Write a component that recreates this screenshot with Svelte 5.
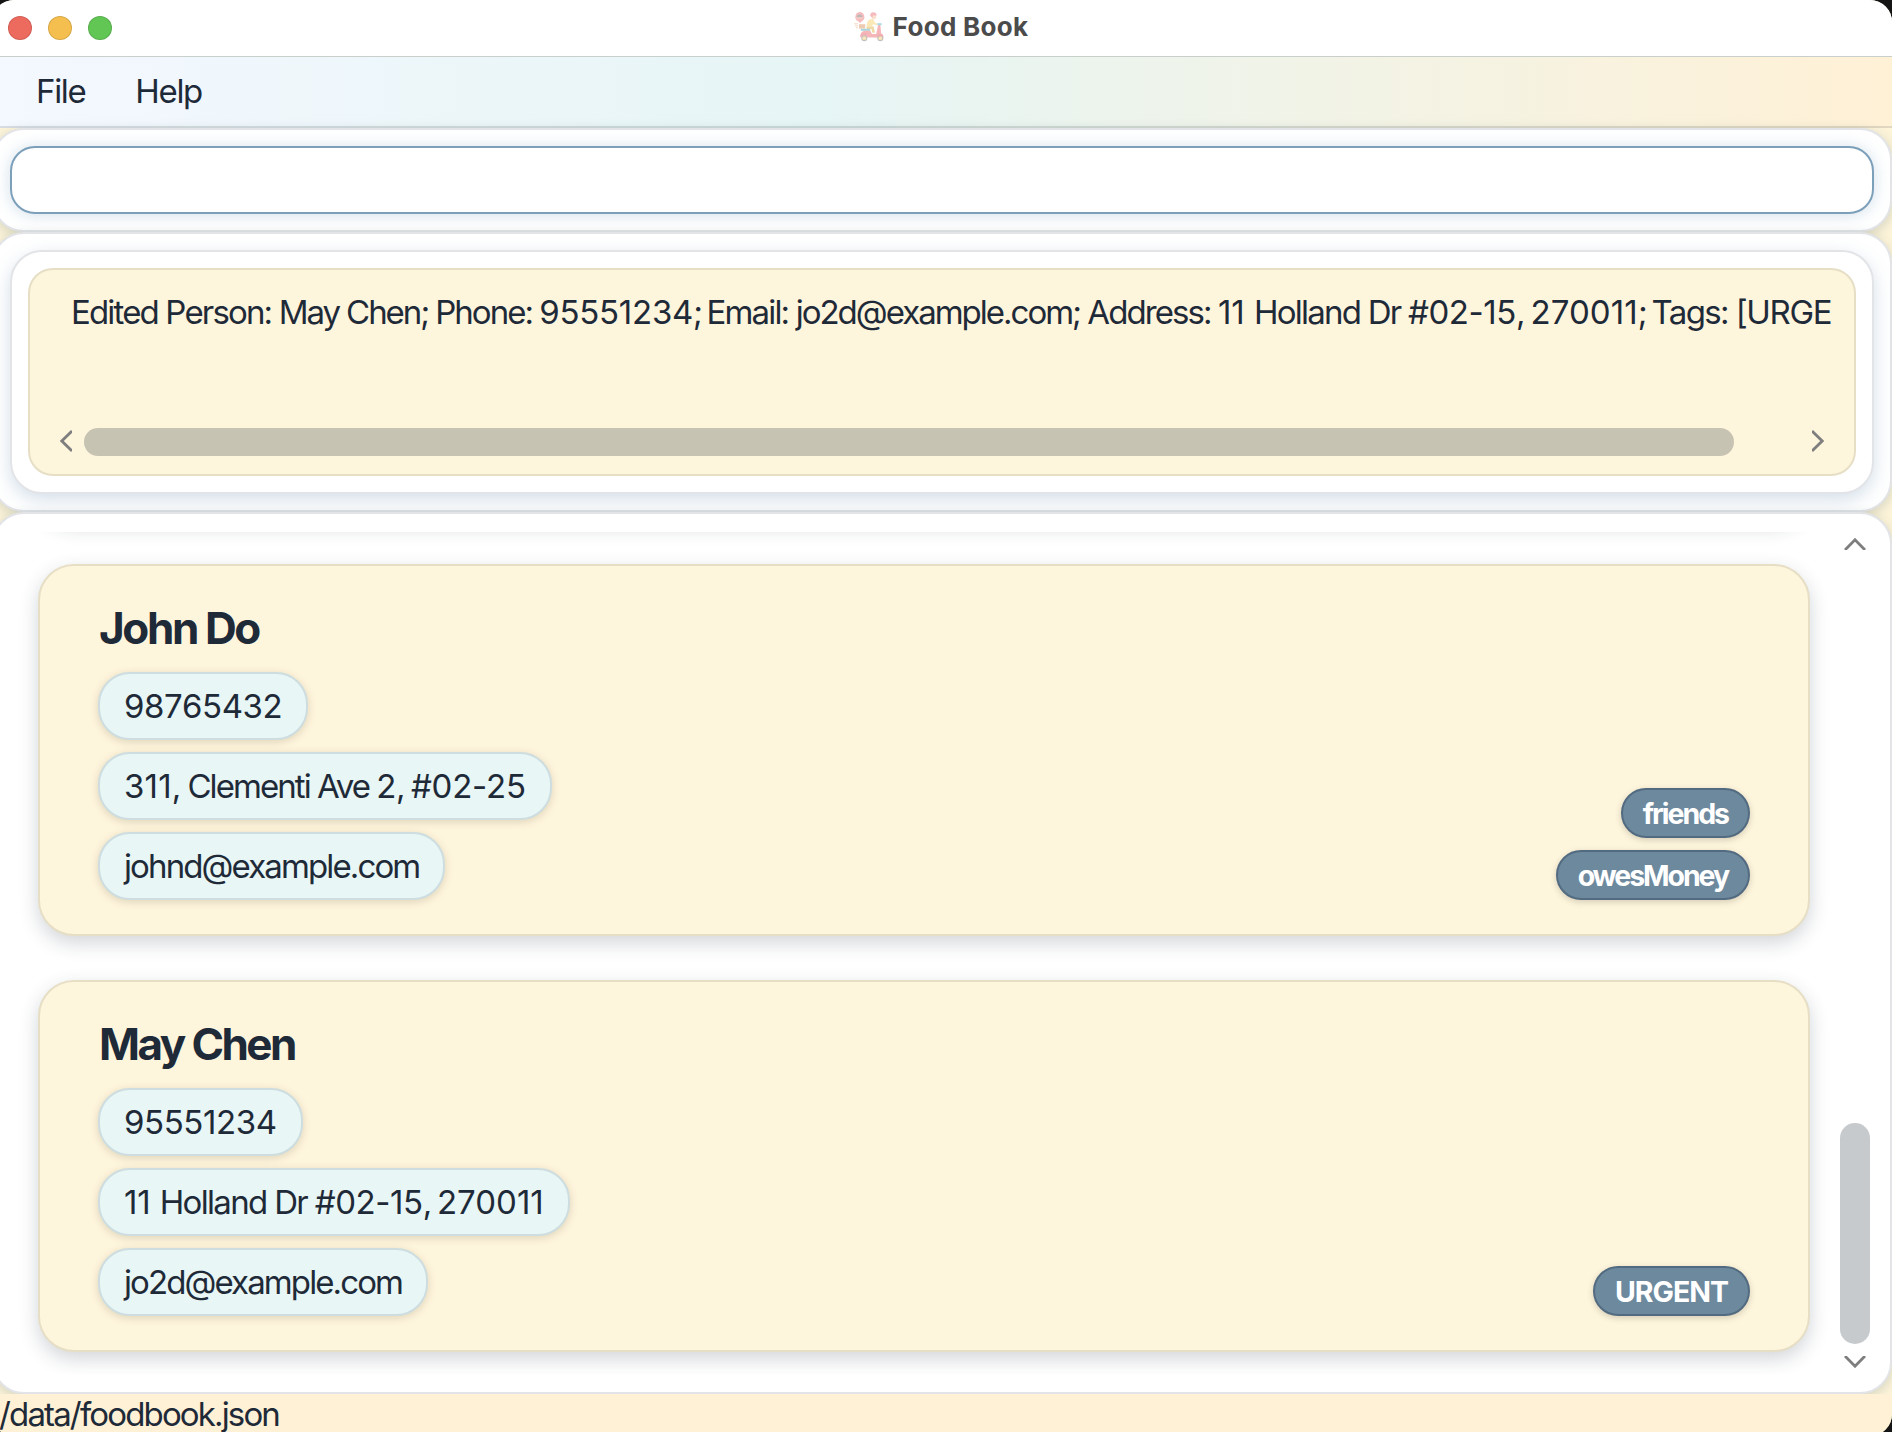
<script>
  // Each text is a list of [content, letter-spacing in px] runs.
  const message = [
    ['Edited Person: ', -1.84], ['May Chen; ', -2.07], ['Phone: ', -2.0], ['95551234', -0.25], ['; ', -2.9],
    ['Email: ', -1.85], ['jo2d@example.com; ', -2.0], ['Address: ', -1.93], ['11 ', 0], ['Holland Dr ', -1.77],
    ['#02-15', -0.4], [', ', -2.2], ['270011', 0.1], ['; ', -2.8], ['Tags: ', -1.6], ['[URGE', -1.35]
  ];

  const people = [
    {
      name: 'John Do',
      spacing: -2.4,
      fields: [
        [['98765432', -0.38]],
        [['311', 0.2], [', ', -1.6], ['Clementi Ave ', -1.93], ['2', -0.6], [', ', -1.9], ['#02-25', -0.2]],
        [['johnd@example.com', -1.88]]
      ],
      tags: [['friends', -2.05], ['owesMoney', -2.1]]
    },
    {
      name: 'May Chen',
      spacing: -2.55,
      fields: [
        [['95551234', -0.42]],
        [['11 ', -0.15], ['Holland Dr ', -1.67], ['#02-15', -0.4], [', ', -2.3], ['270011', 0]],
        [['jo2d@example.com', -1.9]]
      ],
      tags: [['URGENT', -1]]
    }
  ];
</script>

{#snippet runs(list)}{#each list as [text, spacing]}<span style:letter-spacing="{spacing}px">{text}</span>{/each}{/snippet}

<div class="screen">
  <div class="window">
    <header class="titlebar">
      <div class="lights">
        <span class="light red"></span>
        <span class="light yellow"></span>
        <span class="light green"></span>
      </div>
      <div class="title">
        <svg class="logo" viewBox="0 0 30 30" width="30" height="30">
          <path d="M5.6 0a4.9 4.9 0 0 1 2.2 9.2L6 11 4.2 9.3A4.9 4.9 0 0 1 5.6 0z" fill="#f3acae" />
          <path d="M2.8 5.2a2.8 2.6 0 0 1 5.6 0z" fill="#a9a7a5" />
          <path d="M2.5 6h6.2" stroke="#f9d7c5" stroke-width=".9" />
          <path d="M0 11.8h4M1 13.8h3M2 15.8h2" stroke="#f6cfb2" stroke-width="1" />
          <rect x="5" y="12.2" width="6.2" height="4.4" fill="#e9bfa0" />
          <path d="M16.2 3.6a3.3 3.3 0 0 1 6.5-.8l-1 1.8-3.2 1.8z" fill="#f3a9ad" />
          <path d="M18.6 3.6h3.6v2.2l-1.5 1.4h-2z" fill="#fbdcc4" />
          <path d="M15.3 7.4l3.9-.4 1.5 3.5 3 1.2-.4 1.5-4.5-1-.6 2.4h-5.6c0-3 .8-5.8 2.7-7.2z" fill="#fae3a5" />
          <path d="M12.6 14.6h7.1l1.2 6.2h-2.5l-1-3.8h-4.8z" fill="#ecd08f" />
          <path d="M6.8 16.8h9.3v2H6.8z" fill="#8fcdd5" />
          <path d="M6.2 25.2c0-4.3 1.8-6.5 5.3-6.5h4.8l1.6 3.4h4.3l1.9-9h2.3l.7 8.4c1.6.5 2.4 2 2.4 4.3z" fill="#f3a4a8" />
          <path d="M23.3 11.2h4.3v1.9h-4.3z" fill="#93d4dd" />
          <circle cx="10.3" cy="26.2" r="3" fill="#b4b0ac" />
          <circle cx="10.3" cy="26.2" r="1.9" fill="#f8dfa8" />
          <circle cx="26.3" cy="26.2" r="3" fill="#b4b0ac" />
          <circle cx="26.3" cy="26.2" r="1.9" fill="#f8dfa8" />
          <path d="M6.8 22.4h6.8a3.9 3.9 0 0 0-6.8 1.9zM22.8 24.3a3.6 3.6 0 0 1 6.8 0z" fill="#f0979d" />
        </svg>
        <span>Food Book</span>
      </div>
    </header>

    <nav class="menubar">
      <span>File</span>
      <span>Help</span>
    </nav>

    <main>
      <section class="panel command">
        <input type="text" aria-label="Command" />
      </section>

      <section class="panel result">
        <div class="frame">
          <div class="message">
            <p>{@render runs(message)}</p>
            <div class="hscroll">
              <svg viewBox="0 0 12 22" width="12" height="22"><path d="M12 1L1.8 11 12 21" /></svg>
              <div class="hthumb"></div>
              <svg class="end" viewBox="0 0 12 22" width="12" height="22"><path d="M0 1l10.2 10L0 21" /></svg>
            </div>
          </div>
        </div>
      </section>

      <section class="panel list">
        <div class="viewport">
          <article class="card scrolled"></article>
          {#each people as person}
            <article class="card">
              <div class="details">
                <h2>{@render runs([[person.name, person.spacing]])}</h2>
                {#each person.fields as field}
                  <div class="pill">{@render runs(field)}</div>
                {/each}
              </div>
              <div class="tags">
                {#each person.tags as tag}
                  <div class="tag">{@render runs([tag])}</div>
                {/each}
              </div>
            </article>
          {/each}
        </div>
        <div class="vscroll">
          <svg viewBox="0 0 22 12" width="22" height="12"><path d="M1 12L11 1.8 21 12" /></svg>
          <div class="vthumb"></div>
          <svg viewBox="0 0 22 12" width="22" height="12"><path d="M1 0l10 10.2L21 0" /></svg>
        </div>
      </section>
    </main>

    <footer>/data/foodbook.json</footer>
  </div>
</div>

<style>
  :global(body) {
    background: #111;
  }
  * {
    box-sizing: border-box;
  }
  .screen {
    width: 1892px;
    height: 1432px;
    overflow: hidden;
    background: #151515;
    font-family: Inter, 'Liberation Sans', sans-serif;
    font-size: 33px;
    color: #1f2a38;
  }
  /* The window runs past the left and bottom edges of the screen. */
  .window {
    width: 1900px;
    height: 1436px;
    margin-left: -8px;
    border-radius: 22px;
    overflow: hidden;
    display: flex;
    flex-direction: column;
    background: #fdf4da;
  }
  .titlebar {
    height: 57px;
    flex: none;
    display: grid;
    grid-template-columns: 1fr auto 1fr;
    align-items: center;
    background: #fff;
    border-bottom: 1px solid #c9cfca;
  }
  .lights {
    display: flex;
    gap: 16px;
    padding-left: 16px;
  }
  .light {
    width: 24px;
    height: 24px;
    border-radius: 50%;
    border: 1px solid rgba(0, 0, 0, 0.12);
  }
  .red {
    background: #ed6a5e;
  }
  .yellow {
    background: #f5bf4f;
  }
  .green {
    background: #62c655;
  }
  .title {
    display: flex;
    align-items: center;
    gap: 9px;
    padding: 0 2px 2px 0;
    font-size: 26px;
    line-height: 30px;
    font-weight: 700;
    letter-spacing: 0.3px;
    color: #4b4b4b;
  }
  .logo {
    display: block;
    opacity: 0.8;
  }
  .menubar {
    height: 71px;
    flex: none;
    display: flex;
    align-items: center;
    gap: 50px;
    padding: 0 0 1px 44px;
    background: linear-gradient(90deg, #f4f8ff 0%, #e6f5f5 44%, #fff1d6 100%);
    border-bottom: 2px solid rgba(60, 70, 70, 0.15);
    line-height: 40px;
    letter-spacing: -1.35px;
  }
  main {
    height: 1266px;
    flex: none;
    display: flex;
    flex-direction: column;
  }
  .panel {
    background: #fff;
    border: 2px solid #e2e4e7;
    border-radius: 32px;
    padding: 16px;
    flex: none;
    box-shadow: 0 3px 12px rgba(60, 90, 90, 0.22);
  }
  .command {
    height: 104px;
  }
  input {
    display: block;
    width: 100%;
    height: 68px;
    border: 2px solid #7c9fba;
    border-radius: 25px;
    background: #fff;
    outline: none;
    padding: 0 24px;
    font: inherit;
    box-shadow: 0 1px 16px rgba(90, 140, 180, 0.28);
  }
  .result {
    height: 280px;
  }
  .frame {
    height: 244px;
    border: 2px solid #e2e4e8;
    border-radius: 32px;
    padding: 16px;
    background: #fff;
    box-shadow: 0 6px 18px rgba(90, 130, 170, 0.26);
  }
  .message {
    height: 208px;
    border: 2px solid #e6dec5;
    border-radius: 25px;
    background: #fef5dd;
    padding: 22px 22px 18px 30px;
    display: flex;
    flex-direction: column;
    justify-content: space-between;
  }
  p {
    margin: 0 0 0 11px;
    line-height: 40px;
    white-space: pre;
  }
  .hscroll {
    display: flex;
    align-items: center;
    height: 28px;
  }
  .hthumb {
    width: 1650px;
    height: 28px;
    margin-left: 12px;
    border-radius: 14px;
    background: #c7c3b2;
  }
  .hscroll svg,
  .vscroll svg {
    display: block;
    flex: none;
    fill: none;
    stroke: #7e7e7e;
    stroke-width: 2.8;
  }
  .hscroll svg {
    margin-bottom: 2px;
  }
  .hscroll .end {
    margin-left: auto;
    margin-right: 8px;
  }
  .list {
    flex: 1;
    min-height: 0;
    padding: 18px 20px 18px 0;
    display: flex;
    justify-content: space-between;
  }
  .viewport {
    width: 1846px;
    height: 100%;
    padding: 0 30px 0 44px;
    overflow: hidden;
    display: flex;
    flex-direction: column;
    gap: 44px;
  }
  .card {
    height: 372px;
    flex: none;
    border: 2px solid #e6dec5;
    border-radius: 36px;
    background: #fef5dd;
    padding: 38px 58px 34px;
    display: flex;
    justify-content: space-between;
    box-shadow: 0 7px 19px rgba(30, 45, 60, 0.2);
  }
  /* The card before these is scrolled out above; only its shadow shows. */
  .scrolled {
    margin-top: -384px;
  }
  .details {
    display: flex;
    flex-direction: column;
    align-items: flex-start;
    gap: 12px;
  }
  h2 {
    margin: 0 0 8px 1px;
    font-size: 44px;
    line-height: 48px;
    font-weight: 700;
  }
  .pill {
    height: 68px;
    border: 2px solid #cddde0;
    border-radius: 32px;
    background: #e8f6f5;
    padding: 0 24px;
    line-height: 65px;
    white-space: pre;
    box-shadow: 0 2px 8px rgba(90, 80, 40, 0.2);
  }
  .tags {
    display: flex;
    flex-direction: column;
    justify-content: flex-end;
    align-items: flex-end;
    gap: 12px;
  }
  .tag {
    height: 50px;
    border: 2px solid #526b80;
    border-radius: 25px;
    background: #6d899e;
    padding: 1px 20px 0;
    font-size: 28.5px;
    line-height: 46px;
    font-weight: 700;
    color: #fff;
    white-space: pre;
    box-shadow: 0 2px 6px rgba(60, 60, 40, 0.22);
  }
  .vscroll {
    width: 30px;
    padding: 6px 0;
    display: flex;
    flex-direction: column;
    align-items: center;
  }
  .vthumb {
    width: 30px;
    height: 221px;
    margin: auto 0 12px;
    border-radius: 15px;
    background: #c6cacd;
  }
  footer {
    flex: 1;
    padding: 1px 0 0 7px;
    background: #fef1d5;
    line-height: 38px;
    letter-spacing: -1.85px;
  }
</style>
